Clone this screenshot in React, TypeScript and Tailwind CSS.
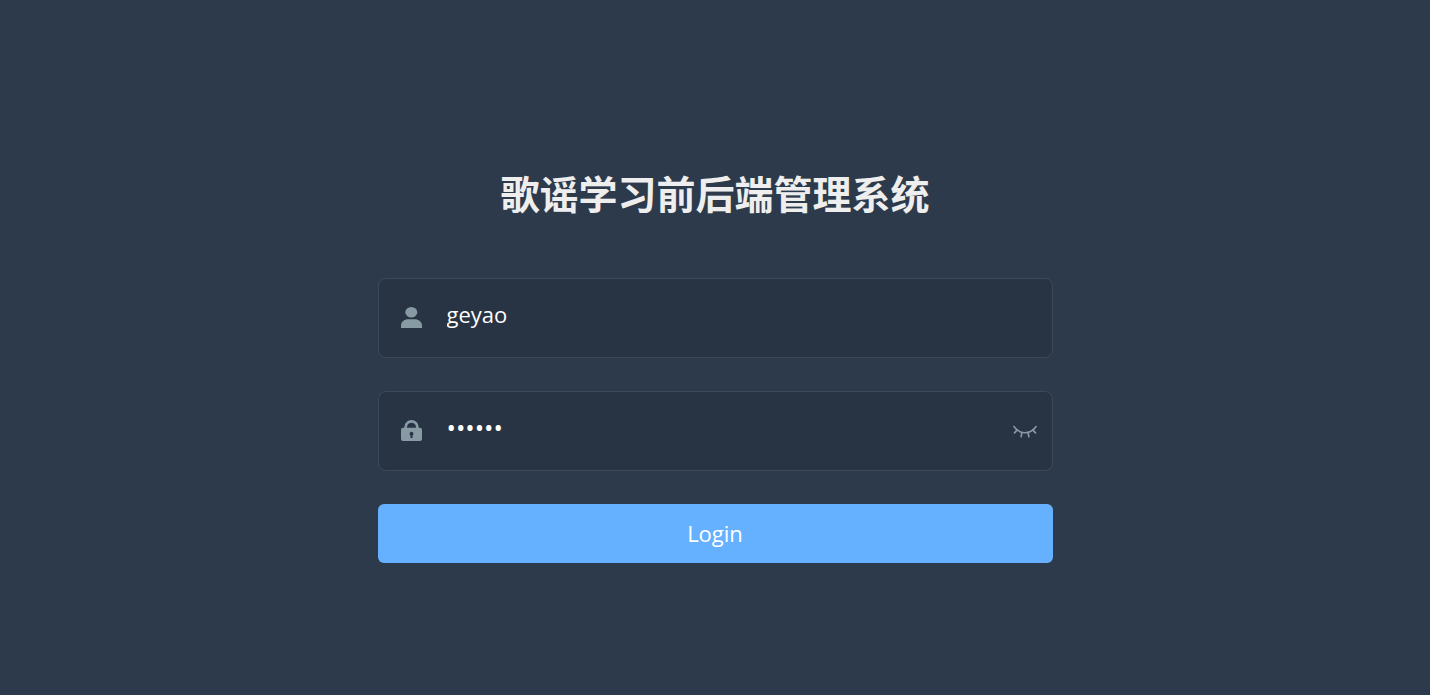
import React, { useState } from 'react'

const UserIcon = () => (
  <svg className="h-[21px] w-[21px]" viewBox="0 0 21 21" fill="currentColor" aria-hidden="true">
    <ellipse cx="10.3" cy="5.3" rx="6" ry="5.3" />
    <path d="M0 21v-2.4C0 14.8 3.4 12.2 7.2 12.2h6.6c3.8 0 7.2 2.6 7.2 6.4V21z" />
  </svg>
)

const LockIcon = () => (
  <svg className="h-[21px] w-[21px]" viewBox="0 0 21 21" aria-hidden="true">
    <path d="M4.7 8.5V7a5.8 5.6 0 0 1 11.6 0v1.5" fill="none" stroke="currentColor" strokeWidth="2.7" />
    <path
      fill="currentColor"
      fillRule="evenodd"
      d="M2 7.8h17a2 2 0 0 1 2 2V19a2 2 0 0 1-2 2H2a2 2 0 0 1-2-2V9.8a2 2 0 0 1 2-2zM10.5 11.8a2 2 0 0 0-1 3.7V18h2v-2.5a2 2 0 0 0-1-3.7z"
    />
  </svg>
)

const EyeClosedIcon = () => (
  <svg className="h-[18px] w-6" viewBox="0 -4 24 18" fill="none" stroke="currentColor" strokeWidth="1.6" strokeLinecap="round" aria-hidden="true">
    <path d="M.9 1.5C3.5 5 7.5 7.8 12 7.8S20.5 5 23.1 1.500" />
    <path d="M4.2 4.9 1.5 7.9M8.9 7.500 8.1 11.8M15.1 7.500l.8 4.300M19.8 4.900l2.700 3" />
  </svg>
)

const EyeOpenIcon = () => (
  <svg className="h-[18px] w-6" viewBox="0 -4 24 18" fill="none" stroke="currentColor" strokeWidth="1.6" aria-hidden="true">
    <path d="M1 7c3-4 6.8-6 11-6s8 2 11 6c-3 4-6.8 6-11 6S4 11 1 7z" />
    <circle cx="12" cy="7" r="3" />
  </svg>
)

const fieldClass =
  'mb-[33px] flex h-20 items-center rounded-lg border border-[#3e4957] bg-[#283443] pb-0.5 pl-[22px] pr-[15px] text-[#889aa4]'
const inputClass =
  'min-w-0 flex-1 bg-transparent pb-1.5 pl-[25px] leading-8 text-white outline-none'

export default function App() {
  const [username, setUsername] = useState('geyao')
  const [password, setPassword] = useState('111111')
  const [visible, setVisible] = useState(false)

  return (
    <main className="min-h-screen bg-[#2d3a4b] px-6 pt-[168px] pb-12 font-['Open_Sans','Noto_Sans_CJK_SC',sans-serif]">
      <form className="mx-auto w-full max-w-[675px]" onSubmit={(e) => e.preventDefault()}>
        <h1 className="mb-[62px] text-center font-['Noto_Sans_CJK_SC',sans-serif] text-[39px] leading-[48px] font-bold text-[#eee]">
          歌谣学习前后端管理系统
        </h1>

        <div className={fieldClass}>
          <label htmlFor="username" aria-label="Username">
            <UserIcon />
          </label>
          <input
            id="username"
            type="text"
            autoComplete="off"
            className={`${inputClass} text-[22px]`}
            value={username}
            onChange={(e) => setUsername(e.target.value)}
          />
        </div>

        <div className={fieldClass}>
          <label htmlFor="password" aria-label="Password">
            <LockIcon />
          </label>
          <input
            id="password"
            type={visible ? 'text' : 'password'}
            autoComplete="off"
            className={`${inputClass} ${visible ? 'text-[22px]' : 'text-[25px]'}`}
            value={password}
            onChange={(e) => setPassword(e.target.value)}
          />
          <button type="button" aria-label="Toggle password" className="cursor-pointer" onClick={() => setVisible(!visible)}>
            {visible ? <EyeOpenIcon /> : <EyeClosedIcon />}
          </button>
        </div>

        <button type="submit" className="h-[59px] w-full cursor-pointer rounded-md bg-[#66b1ff] text-[22px] text-white">
          Login
        </button>
      </form>
    </main>
  )
}
